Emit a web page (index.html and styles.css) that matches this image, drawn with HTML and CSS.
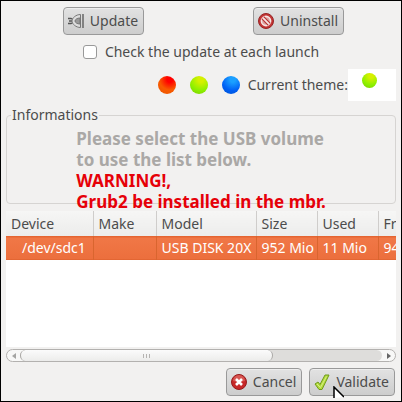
FILE: index.html
```html
<!DOCTYPE html>
<html lang="en">
<head>
  <meta charset="UTF-8">
  <meta name="viewport" content="width=device-width, initial-scale=1.0">
  <title>USB volume</title>
  <link rel="stylesheet" href="styles.css">
</head>
<body>
  <div class="window">
    <div class="actions">
      <button class="button" type="button">
        <svg class="icon" viewBox="0 0 16 16">
          <path d="M0 5.500h3l2 1M0 10.500h3l2-1M1 8h3" fill="none" stroke="#555" stroke-width="1.300"/>
          <path d="M12.500 1.500C8 1.500 4 5 4 8s4 6.500 8.500 6.500z" fill="#ddd" stroke="#777"/>
          <path d="M12 5C9 5 7 6.500 7 8s2 3 5 3z" fill="#999" stroke="#777"/>
          <path d="M15 1v14" stroke="#666" stroke-width="1.500"/>
        </svg>
        Update
      </button>
      <button class="button" type="button">
        <svg class="icon" viewBox="0 0 16 16">
          <circle cx="8" cy="8" r="7.500" fill="#c33434" stroke="#962525"/>
          <circle cx="8" cy="8" r="4.600" fill="#dba3a0" stroke="#f6e6e5" stroke-width="1.600"/>
          <path d="M4.700 4.700l6.600 6.600" stroke="#b82f2f" stroke-width="4"/>
          <path d="M4.700 4.700l6.600 6.600" stroke="#f6e6e5" stroke-width="1.800"/>
        </svg>
        Uninstall
      </button>
    </div>

    <div class="launch">
      <input class="checkbox" type="checkbox" id="launch">
      <label for="launch">Check the update at each launch</label>
    </div>

    <div class="themes">
      <button class="ball orange" type="button" aria-label="Orange"></button>
      <button class="ball green" type="button" aria-label="Green"></button>
      <button class="ball blue" type="button" aria-label="Blue"></button>
      <div class="current">Current theme: <span class="preview"><span class="ball green small"></span></span></div>
    </div>

    <fieldset class="info">
      <legend>Informations</legend>
      <p class="message">
        Please select the USB volume<br>
        to use the list below.<br>
        <span class="warning">WARNING!,<br>
        Grub2 be installed in the mbr.</span>
      </p>
    </fieldset>

    <div class="list">
      <table class="volumes">
        <thead>
          <tr>
            <th class="col-device">Device</th>
            <th class="col-make">Make</th>
            <th class="col-model">Model</th>
            <th class="col-size">Size</th>
            <th class="col-size">Used</th>
            <th class="col-size">Free</th>
          </tr>
        </thead>
        <tbody>
          <tr class="selected">
            <td class="device">/dev/sdc1</td>
            <td></td>
            <td>USB DISK 20X</td>
            <td>952 Mio</td>
            <td>11 Mio</td>
            <td>941 Mio</td>
          </tr>
        </tbody>
      </table>
    </div>

    <div class="scrollbar">
      <button class="arrow" type="button" aria-label="Scroll left">
        <svg viewBox="0 0 4 6"><path d="M4 0v6L0 3z" fill="#a5a5a3"/></svg>
      </button>
      <div class="track">
        <div class="thumb"><i></i><i></i><i></i></div>
      </div>
      <button class="arrow" type="button" aria-label="Scroll right">
        <svg viewBox="0 0 4 6"><path d="M0 0v6l4-3z" fill="#666"/></svg>
      </button>
    </div>

    <div class="footer">
      <button class="button" type="button">
        <svg class="icon" viewBox="0 0 16 16">
          <circle cx="8" cy="8" r="7.500" fill="#c62828" stroke="#951c1c"/>
          <path d="M2 7a6 6 0 0 1 12 0q-6 2-12 0z" fill="#de6b65" opacity=".7"/>
          <path d="M5 5l6 6M11 5l-6 6" stroke="#fff" stroke-width="2.600"/>
        </svg>
        Cancel
      </button>
      <button class="button validate" type="button">
        <svg class="icon" viewBox="0 0 16 16">
          <path d="M1 10L4 8 6 10.500 11 1 15 1 8 15.500 5 15.500z" fill="#b4dc3c" stroke="#6f9a1c" stroke-linejoin="round"/>
          <path d="M3 10l3.500 3.500 6-11" fill="none" stroke="#d6ef86"/>
        </svg>
        Validate
        <svg class="cursor" viewBox="0 0 11 12">
          <path d="M1 12V1L11 11" fill="#fff" stroke="#000" stroke-width="1.500"/>
        </svg>
      </button>
    </div>
  </div>
</body>
</html>
```
FILE: styles.css
```css
* {
  box-sizing: border-box;
}

body {
  margin: 0;
  font-family: "Noto Sans", "Open Sans", sans-serif;
  font-size: 14px;
  line-height: 20px;
  color: #4c4c4c;
  background-color: #f2f1f0;
}

.window {
  display: flex;
  flex-direction: column;
  min-height: 100vh;
  padding: 6px 5px 5px;
  border: 1px solid #000;
}

/* Buttons */
.button {
  display: flex;
  align-items: center;
  gap: 6px;
  height: 28px;
  padding: 0 5px 0 4px;
  font: inherit;
  color: inherit;
  background: linear-gradient(#e2e2e2, #cdcdcd);
  border: 1px solid #999;
  border-radius: 4px;
  box-shadow: inset 0 1px #eee;
}

.icon {
  width: 16px;
  height: 16px;
}

.actions {
  display: grid;
  grid-template-columns: 1fr 1fr;
  justify-items: center;
}

.launch {
  display: flex;
  align-items: center;
  justify-content: center;
  gap: 8px;
  margin-top: 7px;
}

.checkbox {
  appearance: none;
  width: 14px;
  height: 14px;
  margin: 0;
  background-color: #fff;
  border: 1px solid #999;
  border-radius: 3px;
}

/* Themes */
.themes {
  display: flex;
  align-items: center;
  justify-content: flex-end;
  gap: 14px;
  margin-top: 7px;
}

.ball {
  width: 18px;
  height: 18px;
  padding: 0;
  border: none;
  border-radius: 50%;
}

.orange {
  background: radial-gradient(circle at 65% 20%, #f00 15%, #f95a00 55%, #e85500);
}

.green {
  background: radial-gradient(circle at 60% 20%, #d6f000 15%, #8df000 60%, #7ac800);
}

.blue {
  background: radial-gradient(circle at 60% 20%, #1ba0ff 15%, #0060f5 60%, #0050cc);
}

.small {
  width: 15px;
  height: 15px;
}

.current {
  display: flex;
  align-items: center;
  margin-left: -6px;
}

.preview {
  display: flex;
  justify-content: center;
  width: 48px;
  height: 32px;
  padding: 4px 6px 0 0;
  background-color: #fff;
}

/* Informations */
.info {
  height: 99px;
  min-width: 0;
  margin: 4px 0 0;
  padding: 0;
  border: 1px solid #d6d4d2;
  border-radius: 4px;
}

.info legend {
  margin-left: 4px;
  padding: 0 1px;
}

.message {
  width: max-content;
  margin: 3px auto 0;
  font-size: 17px;
  line-height: 21px;
  font-weight: bold;
  color: #aaa8a6;
}

.warning {
  color: #e60008;
}

/* Volumes */
.list {
  flex: 1;
  overflow: hidden;
  margin-top: 7px;
  background-color: #fff;
}

.volumes {
  width: 430px;
  table-layout: fixed;
  border-collapse: collapse;
  white-space: nowrap;
}

.volumes th,
.volumes td {
  padding: 0 0 0 5px;
  font-weight: normal;
  text-align: left;
}

.volumes th {
  height: 25px;
  background: linear-gradient(#f6f6f5, #ececeb);
  border-right: 1px solid #cfcdcb;
}

.volumes td {
  height: 24px;
  border-right: 1px solid #d9652f;
}

.col-device {
  width: 87px;
}

.col-make {
  width: 63px;
}

.col-model {
  width: 100px;
}

.col-size {
  width: 61px;
}

.selected {
  color: #fff;
  background: linear-gradient(#e2602c, #f07746 10%, #ec6f3d 95%, #dc5f2c);
}

.volumes .device {
  padding-left: 16px;
}

/* Scrollbar */
.scrollbar {
  display: flex;
  height: 13px;
  margin-top: 2px;
  background-color: #f8f8f7;
  border: 1px solid #b3b1af;
  border-radius: 7px;
  overflow: hidden;
}

.arrow {
  display: flex;
  align-items: center;
  justify-content: center;
  width: 13px;
  padding: 0;
  background: none;
  border: none;
}

.arrow svg {
  width: 4px;
  height: 6px;
}

.track {
  flex: 1;
  background-color: #dedddb;
  border-radius: 6px;
}

.thumb {
  display: flex;
  align-items: center;
  justify-content: center;
  gap: 2px;
  width: 70%;
  height: 11px;
  background: linear-gradient(#fbfbfb, #ececeb);
  border: solid #a9a7a5;
  border-width: 0 1px;
  border-radius: 6px;
}

.thumb i {
  width: 1px;
  height: 4px;
  background-color: #b5b3b1;
}

/* Footer */
.footer {
  display: flex;
  justify-content: flex-end;
  gap: 7px;
  margin-top: 6px;
  padding-right: 1px;
}

.validate {
  position: relative;
}

.cursor {
  position: absolute;
  left: 23px;
  top: 17px;
  width: 11px;
  height: 12px;
}
```
